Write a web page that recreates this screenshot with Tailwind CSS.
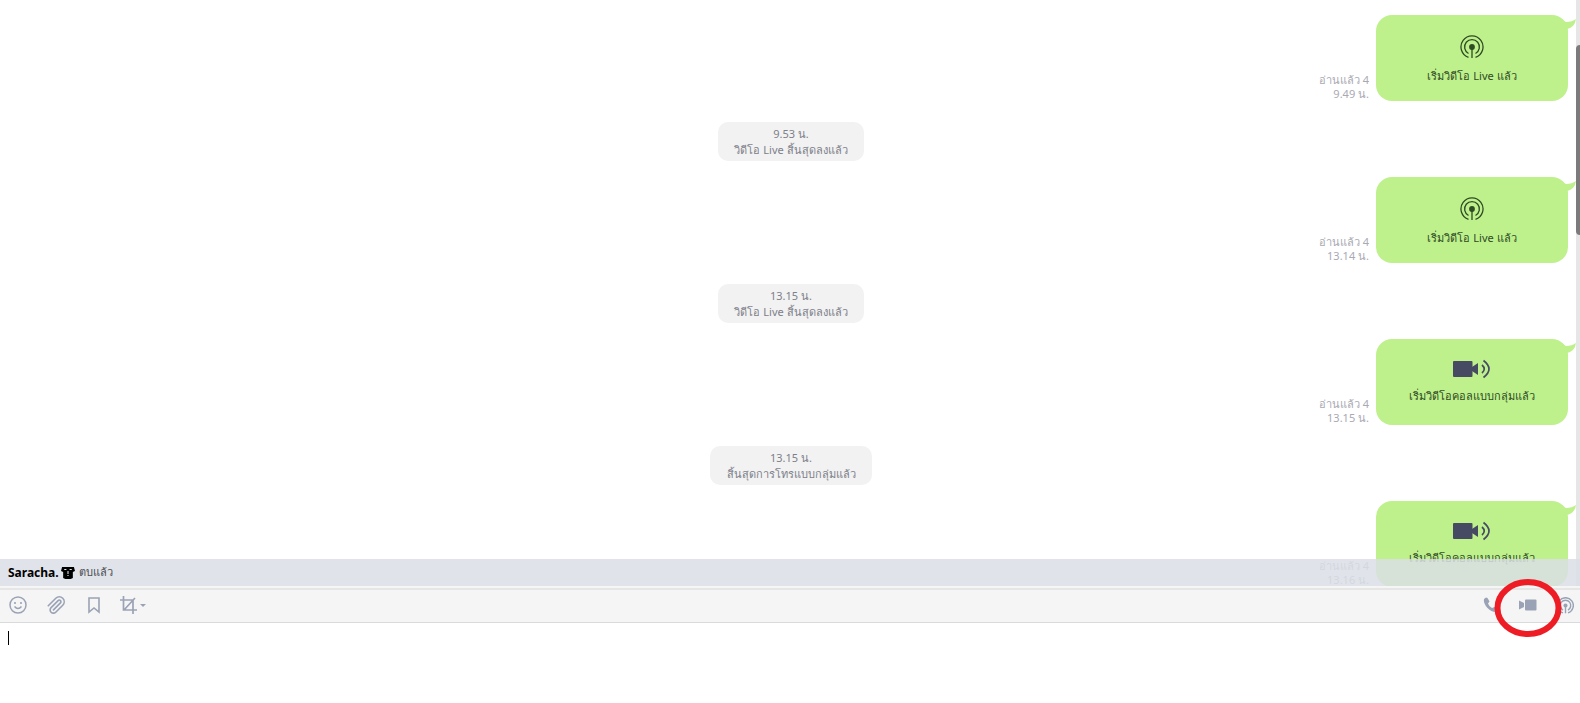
<!DOCTYPE html>
<html lang="th">
  <head>
    <meta charset="UTF-8" />
    <meta name="viewport" content="width=device-width, initial-scale=1.0" />
    <title>Group chat</title>
    <script src="https://cdn.jsdelivr.net/npm/@tailwindcss/browser@4"></script>
  </head>
  <body class="bg-white font-['Noto_Sans','DejaVu_Sans',sans-serif]">
    <!-- shared icons -->
    <svg class="hidden">
      <symbol id="live" viewBox="0 0 24 24">
        <g fill="none" stroke="currentColor">
          <path d="M8.5 22.4A11 11 0 1 1 15.5 22.4" />
          <path d="M8.5 18.5A7.4 7.4 0 1 1 15.5 18.5" />
          <path d="M12 12V23" />
        </g>
        <circle cx="12" cy="12" r="2.9" fill="currentColor" stroke="none" />
      </symbol>
      <symbol id="video" viewBox="0 0 38 20">
        <rect x="0" y="2" width="19.5" height="16" rx="1" fill="currentColor" />
        <path d="M19 8L25 4V16L19 12Z" fill="currentColor" />
        <g fill="none" stroke="currentColor" stroke-width="1.7">
          <path d="M29 6Q33.5 10 29 14" />
          <path d="M30.5 1.5Q41.5 10 30.5 18.5" />
        </g>
      </symbol>
      <symbol id="tail" viewBox="0 0 14 10">
        <path d="M0 0Q2 3 4 3Q10 3 14 0Q13 8 5 10L0 9Z" fill="currentColor" />
      </symbol>
    </svg>

    <div class="flex h-screen flex-col">
      <main class="relative min-h-0 flex-1 overflow-hidden pt-[15px] pl-[2px]">
        <div class="mr-3 flex items-end justify-end gap-[7px]">
          <p class="text-right text-[11px] leading-[14px] text-[#a9a9b3]">อ่านแล้ว 4<br />9.49 น.</p>
          <div class="relative flex h-[86px] w-48 flex-col items-center rounded-2xl bg-[#bef18c] pt-5 text-[#2f4a24]">
            <svg class="absolute top-1 -right-2 h-[10px] w-[14px] text-[#bef18c]"><use href="#tail" /></svg>
            <svg class="size-6" stroke-width="1.3"><use href="#live" /></svg>
            <p class="mt-[9px] text-[11px] leading-4">เริ่มวิดีโอ Live แล้ว</p>
          </div>
        </div>
        <p class="mx-auto mt-[21px] mb-4 h-[39px] w-[146px] rounded-[10px] bg-[#f2f2f2] pt-1 text-center text-[11px] leading-4 text-[#7d808a]">
          9.53 น.<br />วิดีโอ Live สิ้นสุดลงแล้ว
        </p>

        <div class="mr-3 flex items-end justify-end gap-[7px]">
          <p class="text-right text-[11px] leading-[14px] text-[#a9a9b3]">อ่านแล้ว 4<br />13.14 น.</p>
          <div class="relative flex h-[86px] w-48 flex-col items-center rounded-2xl bg-[#bef18c] pt-5 text-[#2f4a24]">
            <svg class="absolute top-1 -right-2 h-[10px] w-[14px] text-[#bef18c]"><use href="#tail" /></svg>
            <svg class="size-6" stroke-width="1.3"><use href="#live" /></svg>
            <p class="mt-[9px] text-[11px] leading-4">เริ่มวิดีโอ Live แล้ว</p>
          </div>
        </div>
        <p class="mx-auto mt-[21px] mb-4 h-[39px] w-[146px] rounded-[10px] bg-[#f2f2f2] pt-1 text-center text-[11px] leading-4 text-[#7d808a]">
          13.15 น.<br />วิดีโอ Live สิ้นสุดลงแล้ว
        </p>

        <div class="mr-3 flex items-end justify-end gap-[7px]">
          <p class="text-right text-[11px] leading-[14px] text-[#a9a9b3]">อ่านแล้ว 4<br />13.15 น.</p>
          <div class="relative flex h-[86px] w-48 flex-col items-center rounded-2xl bg-[#bef18c] pt-5 text-[#2f4a24]">
            <svg class="absolute top-1 -right-2 h-[10px] w-[14px] text-[#bef18c]"><use href="#tail" /></svg>
            <svg class="h-5 w-[38px] text-[#464b63]"><use href="#video" /></svg>
            <p class="mt-[9px] text-[11px] leading-4">เริ่มวิดีโอคอลแบบกลุ่มแล้ว</p>
          </div>
        </div>
        <p class="mx-auto mt-[21px] mb-4 h-[39px] w-[162px] rounded-[10px] bg-[#f2f2f2] pt-1 text-center text-[11px] leading-4 text-[#7d808a]">
          13.15 น.<br />สิ้นสุดการโทรแบบกลุ่มแล้ว
        </p>

        <div class="mr-3 flex items-end justify-end gap-[7px]">
          <p class="text-right text-[11px] leading-[14px] text-[#a9a9b3]">อ่านแล้ว 4<br />13.16 น.</p>
          <div class="relative flex h-[86px] w-48 flex-col items-center rounded-2xl bg-[#bef18c] pt-5 text-[#2f4a24]">
            <svg class="absolute top-1 -right-2 h-[10px] w-[14px] text-[#bef18c]"><use href="#tail" /></svg>
            <svg class="h-5 w-[38px] text-[#464b63]"><use href="#video" /></svg>
            <p class="mt-[9px] text-[11px] leading-4">เริ่มวิดีโอคอลแบบกลุ่มแล้ว</p>
          </div>
        </div>

        <!-- scrollbar -->
        <div class="absolute inset-y-0 right-0 w-1 bg-[#e6e6e6] pt-[45px]">
          <div class="h-[190px] rounded-l-sm bg-[#7b7b7b]"></div>
        </div>

        <!-- new message notice -->
        <div class="absolute inset-x-0 bottom-0 flex h-[27px] items-center bg-[#dadee5]/85 pl-2 text-[11px] text-[#4a4c50]">
          <b class="text-xs text-black">Saracha.</b>
          <svg class="mr-1 ml-[2px] h-3 w-[14px]" viewBox="0 0 13 12" preserveAspectRatio="none">
            <path d="M1 0H12L13 4L11 5V11L9 12H4L2 11V5L0 4Z" />
            <path d="M6 4H7V7H6ZM6 8H7V9H6ZM3 2H5V3H3ZM8 2H10V3H8Z" fill="#dfe2e8" />
          </svg>
          <span>ตบแล้ว</span>
        </div>
      </main>

      <footer class="bg-[#f5f5f5] pt-[2px]">
        <div class="relative z-10 flex h-[35px] items-center justify-between border-t-2 border-b border-t-[#e6e6e6] border-b-[#d9dadc] px-[6px] pb-[2px] text-[#9aa3b5]">
          <div class="flex items-center gap-[14px]">
            <button type="button" aria-label="Stickers">
              <svg class="h-[18px] w-6" viewBox="0 0 18 18" fill="none" stroke="currentColor" stroke-width="1.5">
                <circle cx="9" cy="9" r="8" />
                <path d="M5.5 10.5Q9 14.5 12.5 10.5" />
                <path d="M6 6V8M12 6V8" stroke-width="1.6" />
              </svg>
            </button>
            <button type="button" aria-label="Attach file">
              <svg class="h-[18px] w-6" viewBox="1 1 22 22" fill="none" stroke="currentColor" stroke-width="2" stroke-linecap="round">
                <path d="M21.44 11.05l-9.19 9.19a6 6 0 0 1-8.49-8.49l8.57-8.57A4 4 0 1 1 18 8.84l-8.59 8.57a2 2 0 0 1-2.83-2.83l8.49-8.48" transform="rotate(180 12 12)" />
              </svg>
            </button>
            <button type="button" aria-label="Keep">
              <svg class="h-[18px] w-6" viewBox="0 0 18 18" fill="none" stroke="currentColor" stroke-width="1.6">
                <path d="M4 2H14V16L9 12L4 16Z" />
              </svg>
            </button>
            <button type="button" aria-label="Screen capture">
              <svg class="h-[18px] w-[27px]" viewBox="0 0 27 18" fill="none" stroke="currentColor" stroke-width="1.7">
                <path d="M0 4H13V18M3.5 0V14H17M4 14L15 2" />
                <path d="M20 8H26L23 11Z" fill="currentColor" stroke="none" />
              </svg>
            </button>
          </div>
          <div class="flex items-center gap-5">
            <button type="button" aria-label="Voice call">
              <svg class="size-4" viewBox="0 0 16 16" fill="currentColor">
                <path d="M1 2L3 0.5L4.5 1L6.5 4.5L5 6.5Q6 9.5 9 11L11.5 10L15 13L13 15Q9 15.5 4.5 11Q0 6 1 2Z" />
              </svg>
            </button>
            <button type="button" aria-label="Video call">
              <svg class="h-3 w-[18px]" viewBox="0 0 18 12" fill="currentColor">
                <rect x="6" y="0.5" width="11.5" height="11" rx="1" />
                <path d="M0 1.5L5 4V8L0 10.5Z" />
              </svg>
            </button>
            <button type="button" aria-label="Live">
              <svg class="size-[17px]" stroke-width="2"><use href="#live" /></svg>
            </button>
          </div>
          <!-- highlight ring around the video call button -->
          <svg class="pointer-events-none absolute -top-3 right-[18px] h-[60px] w-[68px]" viewBox="0 0 68 60" fill="none" stroke="#ee1c25" stroke-width="6">
            <ellipse cx="34" cy="30" rx="30.5" ry="26" />
          </svg>
        </div>
        <div class="relative bg-white">
          <textarea aria-label="Message" class="block h-20 w-full resize-none px-2 py-[7px] text-xs text-black outline-none"></textarea>
          <span class="absolute top-2 left-2 h-[14px] w-px bg-black"></span>
        </div>
      </footer>
    </div>
  </body>
</html>
